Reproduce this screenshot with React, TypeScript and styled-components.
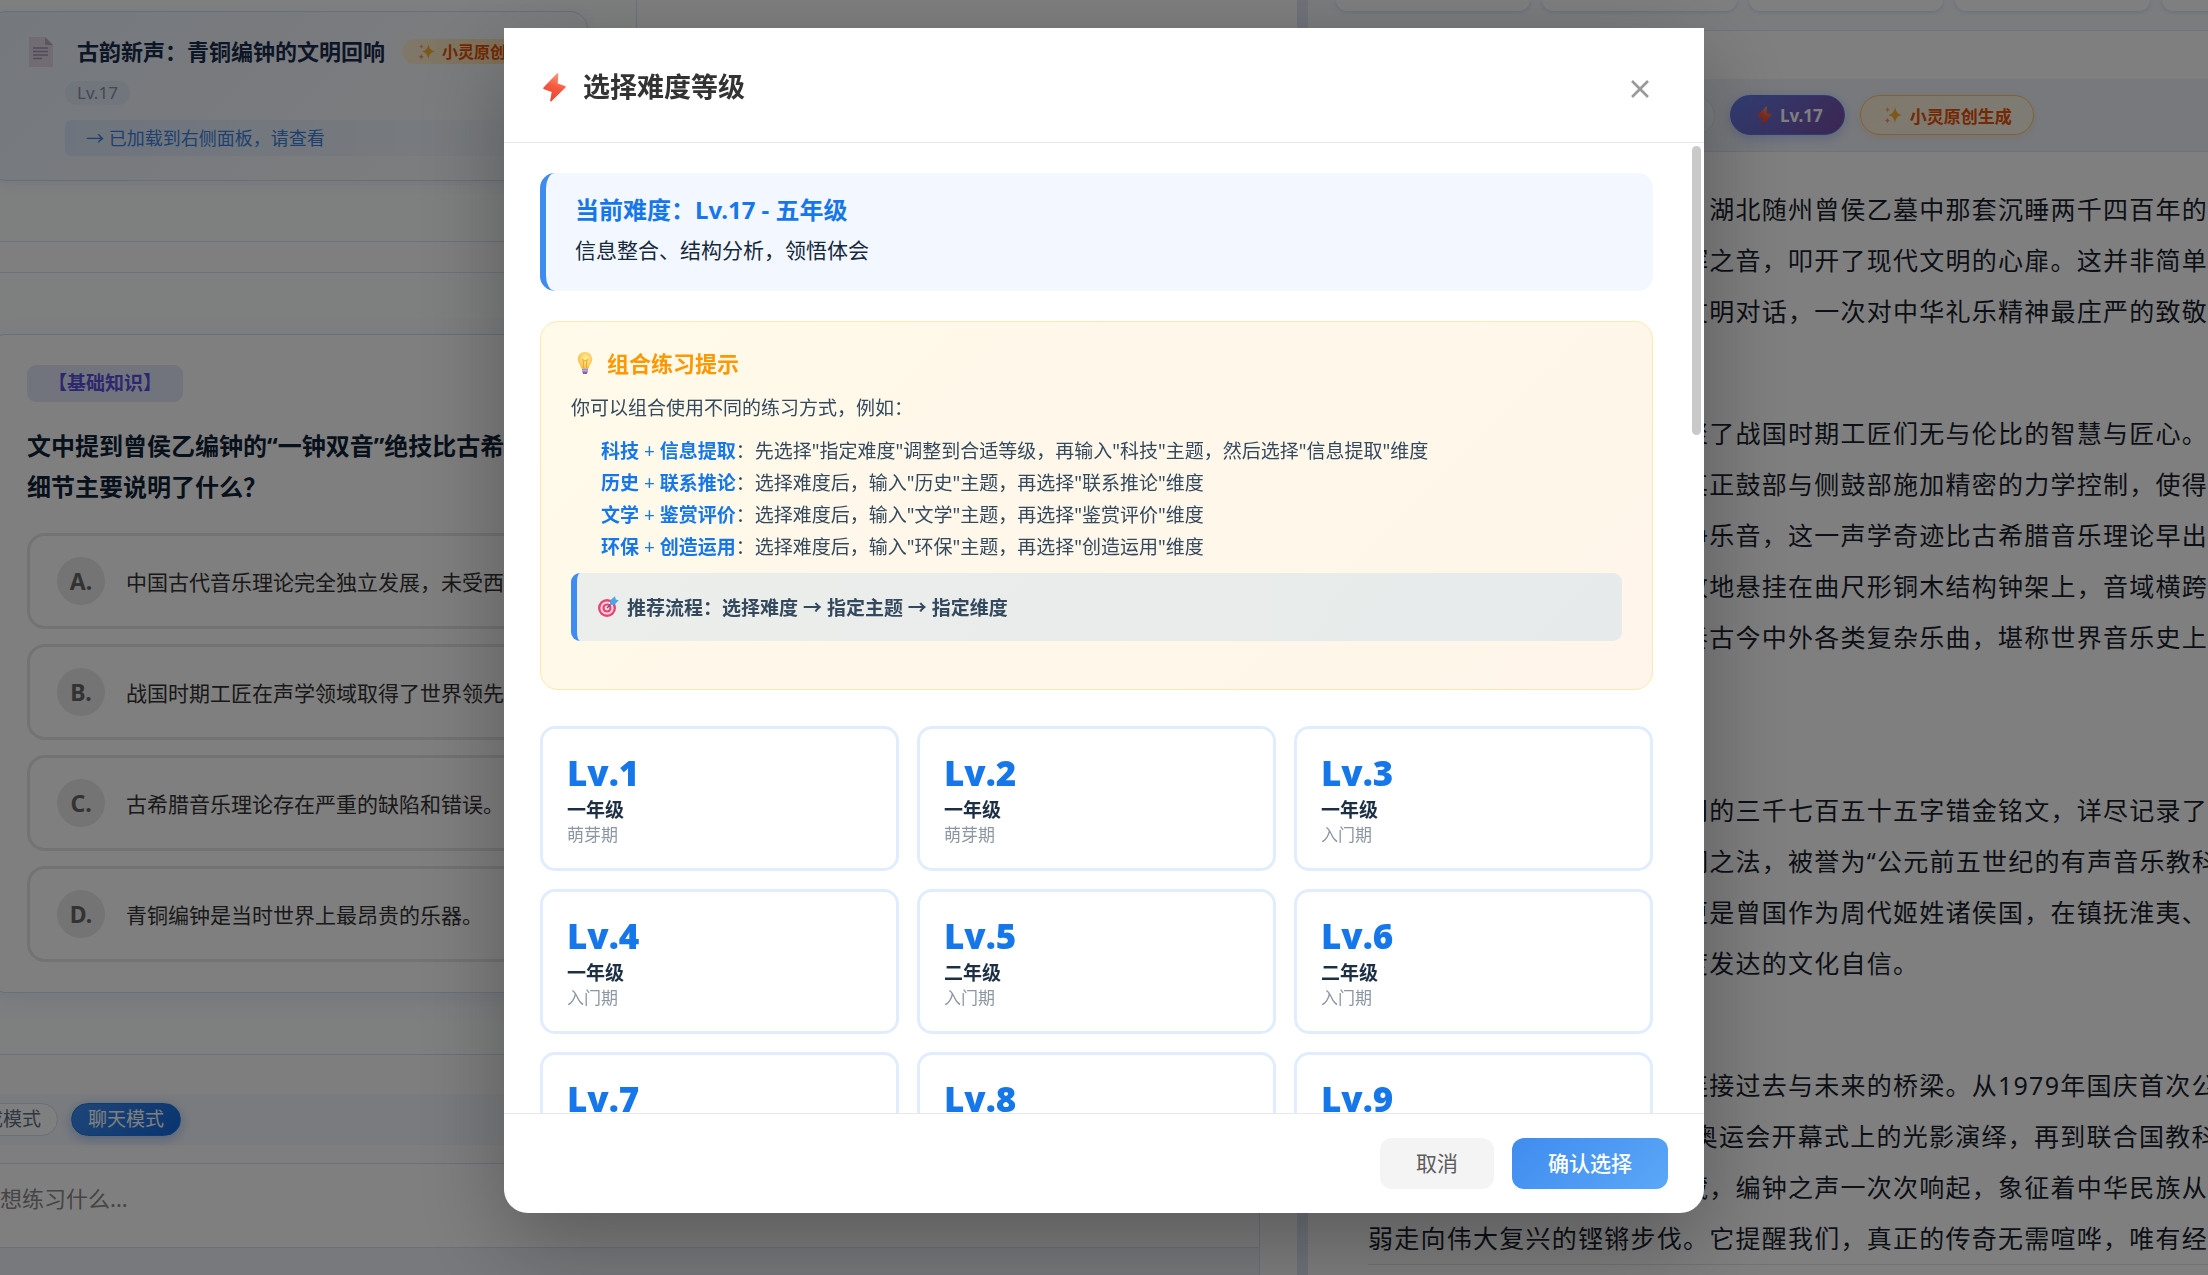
import React from 'react';
import styled, { createGlobalStyle, css } from 'styled-components';

const GlobalStyle = createGlobalStyle`
  *, *::before, *::after { box-sizing: border-box; }
  body {
    margin: 0;
    overflow: hidden;
    background: #fff;
    color: #2c3e50;
    font-family: "Noto Sans", "Noto Sans CJK SC", sans-serif;
  }
  h1, h2, h3, p, ul { margin: 0; padding: 0; }
  ul { list-style: none; }
  button, input { font: inherit; }
`;

/* ---------- icons ---------- */

const Svg = styled.svg`
  display: block;
  flex: none;
`;

const BoltIcon = ({ size }: { size: number }) => (
  <Svg width={size} height={size} viewBox="0 0 28 28" aria-hidden="true">
    <defs>
      <linearGradient id="bolt" x1="0.7" y1="0" x2="0.4" y2="1">
        <stop offset="0" stopColor="#ff9a76" />
        <stop offset="0.5" stopColor="#f4593f" />
        <stop offset="1" stopColor="#ee4136" />
      </linearGradient>
    </defs>
    <path
      d="M16.3.6 3.4 14.1c-.5.6-.3 1.3.4 1.6l7.5 2.6-1.5 8.4c-.1.9.7 1.1 1.2.5L24.6 14c.5-.6.3-1.2-.4-1.5l-7.1-2.4.6-8.7c0-1-.8-1.4-1.4-.8z"
      fill="url(#bolt)"
    />
  </Svg>
);

const SparkleIcon = ({ size }: { size: number }) => (
  <Svg width={size} height={size} viewBox="0 0 18 18" aria-hidden="true">
    <path d="M11 1c.9 4.600 2.300 6.800 6.800 8-4.500 1.200-5.900 3.400-6.800 8-.9-4.600-2.300-6.800-6.800-8 4.500-1.200 5.900-3.400 6.800-8z" fill="#f9b233" />
    <path d="M3.600 1c.3 1.700.8 2.300 2.500 2.800-1.700.5-2.200 1.100-2.500 2.800-.3-1.700-.8-2.300-2.500-2.800C2.800 3.300 3.300 2.700 3.600 1z" fill="#ffa06b" />
    <path d="M3.400 11.500c.3 1.900.9 2.600 2.800 3.100-1.900.5-2.500 1.200-2.800 3.100-.3-1.900-.9-2.600-2.800-3.100 1.900-.5 2.500-1.200 2.800-3.100z" fill="#ff8f5c" />
  </Svg>
);

const DocIcon = () => (
  <Svg width="24" height="30" viewBox="0 0 24 30" aria-hidden="true">
    <path d="M0 0h16l8 8v22H0z" fill="#e2d6e8" />
    <path d="M16 0l8 8h-8z" fill="#b9adc0" />
    <path d="M4 11h15M4 14.500h15M4 18h15M4 21.500h9" stroke="#a497ae" strokeWidth="1.400" />
  </Svg>
);

const BulbIcon = () => (
  <Svg width="22" height="24" viewBox="0 0 22 24" aria-hidden="true">
    <defs>
      <radialGradient id="bulb" cx="0.55" cy="0.4" r="0.6">
        <stop offset="0" stopColor="#fff0a0" />
        <stop offset="1" stopColor="#f9bf3f" />
      </radialGradient>
    </defs>
    <path d="M11 1c4.300 0 7.200 3.200 7.200 7.200 0 3.800-2.800 5.300-3.600 9.300H7.400c-.8-4-3.600-5.500-3.600-9.300C3.800 4.200 6.700 1 11 1z" fill="url(#bulb)" />
    <path d="M9.500 17V11l-1-2.500 2.500 1.500 2.500-1.500-1 2.500v6" fill="none" stroke="#e8a52c" strokeWidth=".9" />
    <path d="M8 17.500h6v2.200H8z" fill="#a58bc4" />
    <path d="M8 20.200h6l-1.200 2.800H9.200z" fill="#7f66a5" />
  </Svg>
);

const TargetIcon = () => (
  <Svg width="22" height="22" viewBox="0 0 22 22" aria-hidden="true">
    <circle cx="10" cy="12" r="9" fill="#e8446f" />
    <circle cx="10" cy="12" r="6.600" fill="#f7d9e3" />
    <circle cx="10" cy="12" r="4.600" fill="#e8446f" />
    <circle cx="10" cy="12" r="2.400" fill="#f7d9e3" />
    <path d="M10 12l6-6" stroke="#7b4b94" strokeWidth="1.400" />
    <path d="M13 8.500l.6-4.500L18 .2l.8 3.200 3 .8L18 8.200l-4.500.8z" fill="#4aa8ea" />
  </Svg>
);

const CloseIcon = () => (
  <Svg width="20" height="20" viewBox="0 0 20 20" aria-hidden="true">
    <path d="M2 2l16 16M18 2L2 18" stroke="#999" strokeWidth="2.600" />
  </Svg>
);

/* ---------- page behind the dialog ---------- */

const Viewport = styled.div`
  height: 100vh;
  overflow: hidden;
`;

const Shell = styled.div`
  display: grid;
  grid-template-columns: 1321fr 11px 1076fr;
  width: calc(100% + 200px);
  height: 100%;
  margin-left: -24px;
`;

const ChatPanel = styled.main`
  display: flex;
  flex-direction: column;
  min-width: 0;
  height: 100vh;
  padding-right: 37px;
  background: #fefefe;
`;

const Divider = styled.div`
  background: #dfe8f5;
`;

const Messages = styled.section`
  flex: 1;
  min-height: 0;
  display: flex;
  flex-direction: column;
  gap: 30px;
  overflow: hidden;
`;

const Bubble = styled.article<{ $wide?: boolean }>`
  flex: none;
  border: 1px solid #d9e5fa;
  background: #fdfefe;
  ${({ $wide }) =>
    $wide
      ? css`padding: 61px 12px 90px 11px;`
      : css`
          width: 661px;
          padding: 11px 48px 60px 11px;
          border-top: 0;
        `}
`;

const DocCard = styled.div`
  display: grid;
  grid-template-columns: 36px 1fr;
  padding: 25px 24px 24px 40px;
  border: 1px solid #cfdff8;
  border-radius: 18px;
  background: linear-gradient(135deg, #eaf1fb, #fcfdfe);
  box-shadow: 0 3px 12px rgba(60, 130, 240, 0.1);
`;

const DocBody = styled.div`
  display: flex;
  flex-direction: column;
  align-items: flex-start;
  min-width: 0;
`;

const DocHead = styled.div`
  display: flex;
  align-items: center;
  gap: 17px;
  height: 28px;
  padding-left: 12px;
  white-space: nowrap;
`;

const DocTitle = styled.h3`
  font-size: 22px;
  line-height: 28px;
  font-weight: 700;
  color: #1a2d4d;
`;

const OriginChip = styled.span`
  display: flex;
  align-items: center;
  gap: 7px;
  height: 25px;
  padding: 0 16px;
  border-radius: 13px;
  background: linear-gradient(90deg, #fff0d4, #ffdfae);
  color: #e65100;
  font-size: 16px;
  font-weight: 700;
`;

const LevelChip = styled.span`
  height: 24px;
  margin-top: 16px;
  padding: 0 12px;
  border-radius: 12px;
  background: #e3ebf9;
  color: #8592a3;
  font-size: 17px;
  line-height: 24px;
`;

const LoadedNotice = styled.p`
  width: 100%;
  height: 36px;
  margin-top: 15px;
  padding: 0 21px;
  border-radius: 6px;
  background: linear-gradient(90deg, #dde9fb, #f6f9fe);
  color: #3b82dc;
  font-size: 18px;
  line-height: 36px;
  white-space: nowrap;
`;

const QuestionCard = styled.div`
  padding: 30px 38px;
  border: 1px solid #cfdff8;
  border-radius: 18px;
  background: #fff;
  box-shadow: 0 6px 24px rgba(60, 130, 240, 0.12);
`;

const Tag = styled.span`
  display: inline-block;
  height: 37px;
  padding: 0 21px;
  border-radius: 9px;
  background: #e3e9fa;
  color: #5b50dc;
  font-size: 19px;
  line-height: 37px;
  font-weight: 700;
`;

const Question = styled.h2`
  margin-top: 23px;
  color: #0f2236;
  font-size: 24px;
  line-height: 41px;
  font-weight: 700;
  white-space: pre-line;
`;

const Options = styled.ul`
  display: grid;
  gap: 15px;
  margin-top: 26px;
`;

const Option = styled.button`
  display: flex;
  align-items: center;
  gap: 21px;
  width: 100%;
  height: 96px;
  padding: 0 27px;
  border: 3px solid #e6e6e6;
  border-radius: 18px;
  background: #fff;
  color: #333;
  font-size: 21px;
  white-space: nowrap;
`;

const OptionLetter = styled.span`
  display: grid;
  place-items: center;
  width: 48px;
  height: 48px;
  border-radius: 50%;
  background: #e8e8e8;
  color: #666;
  font-size: 23px;
  font-weight: 700;
`;

const Composer = styled.section`
  flex: none;
  display: flex;
  flex-direction: column;
  height: 221px;
  border-top: 1px solid #d5e2f8;
  border-right: 1px solid #d5e2f8;
  background: #fdfdfe;
`;

const ModeBar = styled.div`
  display: flex;
  align-items: center;
  gap: 13px;
  height: 51px;
  margin: 39px 0 18px -28px;
  background: #f3f7fc;
`;

const ModeButton = styled.button<{ $active?: boolean }>`
  height: 33px;
  padding: 0 16px;
  border: 1px solid #cfdff6;
  border-radius: 17px;
  background: #fdfeff;
  color: #5c6f84;
  font-size: 19px;
  line-height: 29px;
  white-space: nowrap;
  ${({ $active }) =>
    $active &&
    css`
      border-color: #1f74e4;
      background: linear-gradient(135deg, #3e8cf0, #1268df);
      color: #fff;
      box-shadow: 0 3px 12px rgba(30, 110, 230, 0.35);
    `}
`;

const PromptInput = styled.input`
  width: 100%;
  height: 85px;
  padding: 0 2px 16px;
  border: 0;
  border-top: 1px solid #d5e2f8;
  border-bottom: 1px solid #d5e2f8;
  background: #fff;
  font-size: 22px;
  &::placeholder { color: #8a8a8a; opacity: 1; }
`;

const ComposerFoot = styled.div`
  flex: 1;
  background: #f0f3f9;
`;

const ReaderPanel = styled.aside`
  min-width: 0;
  height: 100vh;
  overflow: hidden;
  background: #fff;
`;

const StatStrip = styled.div`
  display: grid;
  grid-template-columns: repeat(5, 1fr);
  gap: 12px;
  height: 31px;
  padding: 0 28px 19px;
  border-bottom: 1px solid #dce7fa;
  background: #f5f8fd;
`;

const StatCard = styled.div`
  border-radius: 0 0 15px 15px;
  background: #fff;
  box-shadow: 0 1px 4px rgba(60, 110, 200, 0.2);
`;

const MetaBar = styled.div`
  display: flex;
  align-items: center;
  gap: 15px;
  height: 73px;
  margin-top: 48px;
  padding-left: 60px;
  border-bottom: 1px solid #dbe5f7;
  background: #eff3fb;
`;

const SourcePill = styled.span`
  width: 347px;
  height: 39px;
  border: 1px solid #e2eaf6;
  border-radius: 20px;
  background: #f8fafd;
`;

const MetaPill = styled.span<{ $tone: 'level' | 'origin' }>`
  display: flex;
  align-items: center;
  height: 40px;
  border-radius: 20px;
  font-size: 17px;
  font-weight: 700;
  white-space: nowrap;
  ${({ $tone }) =>
    $tone === 'level'
      ? css`
          gap: 6px;
          padding: 0 21px 0 24px;
          border: 1px solid #5a78ea;
          background: linear-gradient(135deg, #667eea, #764ba2);
          color: #fff;
          box-shadow: 0 3px 12px rgba(102, 126, 234, 0.35);
        `
      : css`
          gap: 8px;
          padding: 0 21px 0 23px;
          border: 1px solid #ffc36e;
          background: linear-gradient(135deg, #fff0d8, #fbf8ea);
          color: #e65100;
          box-shadow: 0 3px 9px rgba(255, 170, 60, 0.2);
        `}
`;

const Article = styled.article`
  display: grid;
  gap: 71px;
  margin: 32px 0 0 60px;
  border-bottom: 1px solid #dfe4ee;
  color: #1a1f2e;
  font-size: 25px;
  line-height: 51px;
  letter-spacing: 0.05em;
`;

const Line = styled.span`
  display: block;
  height: 51px;
  white-space: nowrap;
`;

/* ---------- dialog ---------- */

const Overlay = styled.div`
  position: fixed;
  inset: 0;
  display: flex;
  justify-content: center;
  align-items: flex-start;
  padding-top: 28px;
  background: rgba(0, 0, 0, 0.5);
`;

const Dialog = styled.section`
  display: flex;
  flex-direction: column;
  width: min(1200px, 90vw);
  height: calc(100vh - 90px);
  overflow: hidden;
  border-radius: 0 0 24px 24px;
  background: #fff;
  box-shadow: 0 30px 90px rgba(0, 0, 0, 0.3);
`;

const DialogHeader = styled.header`
  display: flex;
  align-items: center;
  justify-content: space-between;
  flex: none;
  height: 115px;
  padding: 4px 48px 0 36px;
  border-bottom: 1px solid #e8e8e8;
`;

const DialogTitle = styled.h1`
  display: flex;
  align-items: center;
  gap: 14px;
  color: #333;
  font-size: 27px;
  line-height: 38px;
  font-weight: 700;
`;

const CloseButton = styled.button`
  display: grid;
  place-items: center;
  width: 32px;
  height: 32px;
  margin-top: 4px;
  padding: 0;
  border: 0;
  background: none;
`;

const DialogBody = styled.div`
  display: flex;
  flex: 1;
  min-height: 0;
`;

const ScrollArea = styled.div`
  flex: 1;
  min-width: 0;
  overflow: hidden;
  padding: 30px 36px 0;
`;

const ScrollTrack = styled.div`
  width: 15px;
  padding: 3px;
`;

const ScrollThumb = styled.div`
  width: 9px;
  height: 30%;
  border-radius: 5px;
  background: #c9c9c9;
`;

const Current = styled.section`
  height: 118px;
  padding: 17px 29px;
  border-left: 6px solid #3f8cf0;
  border-radius: 15px;
  background: #f3f7ff;
`;

const CurrentTitle = styled.h2`
  color: #1677ea;
  font-size: 24px;
  line-height: 39px;
  font-weight: 700;
`;

const CurrentText = styled.p`
  color: #15293d;
  font-size: 21px;
  line-height: 42px;
`;

const Tips = styled.section`
  margin-top: 30px;
  padding: 26px 30px 48px;
  border: 1px solid #ffe7ae;
  border-radius: 18px;
  background: linear-gradient(135deg, #fffaea, #fff5ea);
  color: #34495e;
  font-size: 19px;
`;

const TipsTitle = styled.h2`
  display: flex;
  align-items: center;
  gap: 11px;
  padding-left: 3px;
  color: #ff9800;
  font-size: 22px;
  line-height: 30px;
  font-weight: 700;
`;

const TipsIntro = styled.p`
  margin-top: 14px;
  line-height: 32px;
`;

const TipsList = styled.ul`
  margin-top: 11px;
  padding-left: 30px;
  line-height: 32px;
  b { color: #1677ea; }
`;

const Plus = styled.span`
  color: #1677ea;
`;

const Flow = styled.p`
  display: flex;
  align-items: center;
  gap: 8px;
  height: 68px;
  margin-top: 10px;
  padding: 0 20px;
  border-left: 6px solid #3f8cf0;
  border-radius: 9px;
  background: linear-gradient(90deg, rgba(64, 140, 240, 0.1), rgba(64, 160, 240, 0.13));
  font-weight: 700;
`;

const LevelGrid = styled.div`
  display: grid;
  grid-template-columns: repeat(3, 1fr);
  gap: 18px;
  margin-top: 36px;
`;

const LevelCard = styled.button`
  display: flex;
  flex-direction: column;
  align-items: flex-start;
  height: 145px;
  padding: 20px 24px;
  border: 3px solid #e1edff;
  border-radius: 15px;
  background: #fff;
  text-align: left;
`;

const LevelNumber = styled.span`
  color: #1677ea;
  font-family: "Open Sans", "Noto Sans", sans-serif;
  font-size: 35px;
  line-height: 48px;
  font-weight: 800;
`;

const Grade = styled.span`
  color: #1c2f44;
  font-size: 19px;
  line-height: 26px;
  font-weight: 700;
`;

const Stage = styled.span`
  color: #8c97a3;
  font-size: 17px;
  line-height: 24px;
`;

const DialogFooter = styled.footer`
  display: flex;
  align-items: center;
  justify-content: flex-end;
  gap: 18px;
  flex: none;
  height: 100px;
  padding: 0 36px;
  border-top: 1px solid #e8e8e8;
`;

const ActionButton = styled.button<{ $primary?: boolean }>`
  height: 51px;
  padding: 0 36px;
  border: 0;
  border-radius: 12px;
  background: ${({ $primary }) => ($primary ? 'linear-gradient(135deg, #3f8cf0, #5ba7f7)' : '#f4f4f4')};
  color: ${({ $primary }) => ($primary ? '#fff' : '#5c5c5c')};
  font-size: 21px;
  line-height: 49px;
  font-weight: ${({ $primary }) => ($primary ? 500 : 400)};
`;

/* ---------- data ---------- */

const options = [
  ['A.', '中国古代音乐理论完全独立发展，未受西方'],
  ['B.', '战国时期工匠在声学领域取得了世界领先'],
  ['C.', '古希腊音乐理论存在严重的缺陷和错误。'],
  ['D.', '青铜编钟是当时世界上最昂贵的乐器。'],
];

const paragraphs = [
  [
    '　　当青铜的回响穿越时空，湖北随州曾侯乙墓中那套沉睡两千四百年的',
    '编钟终于再度苏醒以恢弘光辉之音，叩开了现代文明的心扉。这并非简单',
    '的文物展示而是跨越千年的文明对话，一次对中华礼乐精神最庄严的致敬',
  ],
  [
    '　　曾侯乙墓编钟的铸造凝聚了战国时期工匠们无与伦比的智慧与匠心。',
    '每一件钟都能够通过分别对其正鼓部与侧鼓部施加精密的力学控制，使得一',
    '钟能够发出两个不同音的纯净乐音，这一声学奇迹比古希腊音乐理论早出',
    '许多，整套编钟都错落而有致地悬挂在曲尺形铜木结构钟架上，音域横跨',
    '五个半八度，能够完整地演奏古今中外各类复杂乐曲，堪称世界音乐史上',
    '的奇迹。',
  ],
  [
    '　　更为珍贵的是钟体与架间的三千七百五十五字错金铭文，详尽记录了',
    '先秦时期各诸国的乐律与旋调之法，被誉为“公元前五世纪的有声音乐教科',
    '书，而这一些珍贵的文字，更是曾国作为周代姬姓诸侯国，在镇抚淮夷、',
    '拱卫王室的历史之中拥有高度发达的文化自信。',
  ],
  [
    '　　到了今天，编钟依然是连接过去与未来的桥梁。从1979年国庆首次公',
    '开幕演奏，再到2008年北京奥运会开幕式上的光影演绎，再到联合国教科',
    '文组织的世界记忆遗产的珍藏，编钟之声一次次响起，象征着中华民族从',
    '弱走向伟大复兴的铿锵步伐。它提醒我们，真正的传奇无需喧哗，唯有经',
  ],
];

const tips = [
  ['科技', '信息提取', '先选择"指定难度"调整到合适等级，再输入"科技"主题，然后选择"信息提取"维度'],
  ['历史', '联系推论', '选择难度后，输入"历史"主题，再选择"联系推论"维度'],
  ['文学', '鉴赏评价', '选择难度后，输入"文学"主题，再选择"鉴赏评价"维度'],
  ['环保', '创造运用', '选择难度后，输入"环保"主题，再选择"创造运用"维度'],
];

const levels = [
  ['Lv.1', '一年级', '萌芽期'],
  ['Lv.2', '一年级', '萌芽期'],
  ['Lv.3', '一年级', '入门期'],
  ['Lv.4', '一年级', '入门期'],
  ['Lv.5', '二年级', '入门期'],
  ['Lv.6', '二年级', '入门期'],
  ['Lv.7', '二年级', '入门期'],
  ['Lv.8', '二年级', '入门期'],
  ['Lv.9', '三年级', '入门期'],
];

/* ---------- view ---------- */

const Chat = () => (
  <ChatPanel>
    <Messages>
      <Bubble>
        <DocCard>
          <DocIcon />
          <DocBody>
            <DocHead>
              <DocTitle>古韵新声：青铜编钟的文明回响</DocTitle>
              <OriginChip>
                <SparkleIcon size={17} />
                小灵原创
              </OriginChip>
            </DocHead>
            <LevelChip>Lv.17</LevelChip>
            <LoadedNotice>→ 已加载到右侧面板，请查看</LoadedNotice>
          </DocBody>
        </DocCard>
      </Bubble>
      <Bubble $wide>
        <QuestionCard>
          <Tag>【基础知识】</Tag>
          <Question>{'文中提到曾侯乙编钟的“一钟双音”绝技比古希腊\n细节主要说明了什么？'}</Question>
          <Options>
            {options.map(([letter, text]) => (
              <li key={letter}>
                <Option type="button">
                  <OptionLetter>{letter}</OptionLetter>
                  {text}
                </Option>
              </li>
            ))}
          </Options>
        </QuestionCard>
      </Bubble>
    </Messages>
    <Composer>
      <ModeBar>
        <ModeButton type="button">生成模式</ModeButton>
        <ModeButton type="button" $active>
          聊天模式
        </ModeButton>
      </ModeBar>
      <PromptInput aria-label="练习内容" placeholder="你想练习什么..." />
      <ComposerFoot />
    </Composer>
  </ChatPanel>
);

const Reader = () => (
  <ReaderPanel>
    <StatStrip>
      {[0, 1, 2, 3, 4].map((n) => (
        <StatCard key={n} />
      ))}
    </StatStrip>
    <MetaBar>
      <SourcePill />
      <MetaPill $tone="level">
        <BoltIcon size={19} />
        Lv.17
      </MetaPill>
      <MetaPill $tone="origin">
        <SparkleIcon size={18} />
        小灵原创生成
      </MetaPill>
    </MetaBar>
    <Article>
      {paragraphs.map((lines) => (
        <p key={lines[0]}>
          {lines.map((line) => (
            <Line key={line}>{line}</Line>
          ))}
        </p>
      ))}
    </Article>
  </ReaderPanel>
);

const LevelDialog = () => (
  <Overlay>
    <Dialog role="dialog" aria-modal="true" aria-labelledby="dialog-title">
      <DialogHeader>
        <DialogTitle id="dialog-title">
          <BoltIcon size={29} />
          选择难度等级
        </DialogTitle>
        <CloseButton type="button" aria-label="关闭">
          <CloseIcon />
        </CloseButton>
      </DialogHeader>
      <DialogBody>
        <ScrollArea>
          <Current>
            <CurrentTitle>当前难度：Lv.17 - 五年级</CurrentTitle>
            <CurrentText>信息整合、结构分析，领悟体会</CurrentText>
          </Current>
          <Tips>
            <TipsTitle>
              <BulbIcon />
              组合练习提示
            </TipsTitle>
            <TipsIntro>你可以组合使用不同的练习方式，例如：</TipsIntro>
            <TipsList>
              {tips.map(([theme, skill, text]) => (
                <li key={theme}>
                  <b>{theme}</b>
                  <Plus> + </Plus>
                  <b>{skill}</b>：{text}
                </li>
              ))}
            </TipsList>
            <Flow>
              <TargetIcon />
              推荐流程：选择难度 → 指定主题 → 指定维度
            </Flow>
          </Tips>
          <LevelGrid>
            {levels.map(([level, grade, stage]) => (
              <LevelCard key={level} type="button">
                <LevelNumber>{level}</LevelNumber>
                <Grade>{grade}</Grade>
                <Stage>{stage}</Stage>
              </LevelCard>
            ))}
          </LevelGrid>
        </ScrollArea>
        <ScrollTrack>
          <ScrollThumb />
        </ScrollTrack>
      </DialogBody>
      <DialogFooter>
        <ActionButton type="button">取消</ActionButton>
        <ActionButton type="button" $primary>
          确认选择
        </ActionButton>
      </DialogFooter>
    </Dialog>
  </Overlay>
);

export default function App() {
  return (
    <>
      <GlobalStyle />
      <Viewport>
        <Shell>
          <Chat />
          <Divider />
          <Reader />
        </Shell>
      </Viewport>
      <LevelDialog />
    </>
  );
}
